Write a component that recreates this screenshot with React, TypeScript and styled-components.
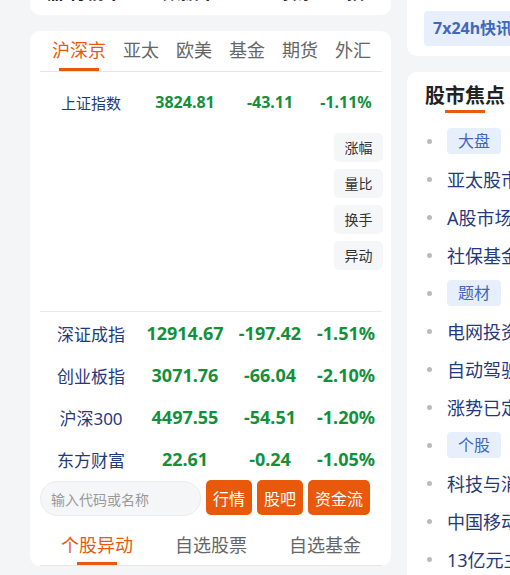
import React, {FC} from 'react';
import styled, {createGlobalStyle} from 'styled-components';

const GlobalStyle = createGlobalStyle`
	body {
		margin: 0;
		background: #f4f5f7;
		overflow: hidden;
		font-family: "Noto Sans", "Noto Sans CJK SC", sans-serif;
	}
`;

const ORANGE = '#e8590c';
const NAVY = '#1f3a7e';
const GREEN = '#13903c';
const TAG_BG = '#e7effc';
const TAG_FG = '#3f68c0';

const Page = styled.div`
	display: flex;
	align-items: flex-start;
	gap: 16px;
	padding-left: 30px;
	margin-top: -28px;
`;

const Column = styled.div<{$width: number}>`
	display: flex;
	flex-direction: column;
	gap: 16px;
	width: ${p => p.$width}px;
	flex-shrink: 0;
`;

const Card = styled.div`
	background: #fff;
	border-radius: 10px;
`;

// only the bottom edge of this card is on screen
const TopStrip = styled(Card)`
	display: flex;
	gap: 22px;
	padding: 8px 16px 11px;
	font-size: 18px;
	line-height: 24px;
	font-weight: 700;
	color: #222;
	white-space: nowrap;
	overflow: hidden;
`;

const MarketCard = styled(Card)`
	padding: 0 9px 0 10px;
`;

const TabBar = styled.div<{$even?: boolean}>`
	display: flex;
	gap: ${p => (p.$even ? '0' : '17px')};
	padding-left: ${p => (p.$even ? '0' : '12px')};
	padding-top: ${p => (p.$even ? '8px' : '0')};
	border-bottom: 1px solid #e6e6e6;
`;

const Tab = styled.div<{$active?: boolean; $even?: boolean}>`
	position: relative;
	flex: ${p => (p.$even ? '1' : '0 0 auto')};
	text-align: center;
	height: ${p => (p.$even ? '42px' : '40px')};
	line-height: ${p => (p.$even ? '44px' : '38px')};
	font-size: 18px;
	color: ${p => (p.$active ? ORANGE : '#666')};
	cursor: pointer;

	&::after {
		content: '';
		display: ${p => (p.$active ? 'block' : 'none')};
		position: absolute;
		left: 50%;
		bottom: 0;
		width: 40px;
		height: 3px;
		margin-left: -20px;
		background: ${ORANGE};
	}
`;

const ChartArea = styled.div`
	height: 224px;
	padding-top: 15px;
	border-bottom: 1px solid #e9e9e9;
`;

const QuoteRow = styled.div<{$small?: boolean}>`
	display: grid;
	grid-template-columns: 102px 86px 84px 68px;
	align-items: center;
	height: ${p => (p.$small ? '30px' : '42px')};
	text-align: center;
	white-space: nowrap;
`;

const QuoteName = styled.span<{$small?: boolean}>`
	font-size: ${p => (p.$small ? '15px' : '17px')};
	color: ${NAVY};
`;

const QuoteNum = styled.span<{$small?: boolean}>`
	font-size: ${p => (p.$small ? '16px' : '18px')};
	font-weight: 700;
	color: ${GREEN};
`;

const SortStack = styled.div`
	display: flex;
	flex-direction: column;
	align-items: flex-end;
	gap: 7px;
	margin-top: 16px;
`;

const SortButton = styled.div`
	width: 49px;
	height: 29px;
	line-height: 29px;
	text-align: center;
	border-radius: 5px;
	background: #f5f6f8;
	font-size: 14px;
	color: #333;
	margin-right: -1px;
`;

const SearchRow = styled.div`
	display: flex;
	gap: 5px;
	height: 35px;
`;

const SearchInput = styled.input`
	width: 161px;
	height: 35px;
	box-sizing: border-box;
	margin: 1px 0 0;
	padding: 0 10px;
	border: 1px solid #ebebeb;
	border-radius: 18px;
	background: #f5f6f8;
	font-family: "Noto Sans CJK SC", sans-serif;
	font-size: 14px;
	color: #333;
	outline: none;

	&::placeholder {
		color: #999;
	}
`;

const ActionButton = styled.button`
	height: 35px;
	padding: 0 7px;
	border: none;
	border-radius: 5px;
	background: ${ORANGE};
	color: #fff;
	font-family: "Noto Sans CJK SC", sans-serif;
	font-size: 16px;
	cursor: pointer;
`;

const NewsTopCard = styled(Card)`
	padding: 39px 17px 10px;
`;

const Tag = styled.span<{$big?: boolean}>`
	display: inline-block;
	height: ${p => (p.$big ? '35px' : '26px')};
	line-height: ${p => (p.$big ? '35px' : '26px')};
	padding: 0 ${p => (p.$big ? '9px' : '11px')};
	border-radius: 4px;
	background: ${TAG_BG};
	color: ${TAG_FG};
	font-size: 16px;
	font-weight: ${p => (p.$big ? 700 : 400)};
	white-space: nowrap;
`;

const FocusCard = styled(Card)`
	padding: 12px 18px;
`;

const FocusTitle = styled.div`
	display: inline-flex;
	flex-direction: column;
	align-items: center;
	gap: 2px;
	font-size: 20px;
	line-height: 24px;
	font-weight: 700;
	color: #222;

	&::after {
		content: '';
		width: 40px;
		height: 3px;
		background: ${ORANGE};
	}
`;

const FocusList = styled.ul`
	list-style: none;
	margin: 9px 0 0;
	padding: 0;
`;

const FocusItem = styled.li`
	display: flex;
	align-items: center;
	height: 38px;
	font-size: 18px;
	color: ${NAVY};
	white-space: nowrap;

	&::before {
		content: '';
		flex-shrink: 0;
		width: 5px;
		height: 5px;
		border-radius: 50%;
		background: #bbb;
		margin: 0 15px 0 2px;
	}
`;

type Quote = {name: string; price: string; change: string; pct: string};

const quotes: Quote[] = [
	{name: '深证成指', price: '12914.67', change: '-197.42', pct: '-1.51%'},
	{name: '创业板指', price: '3071.76', change: '-66.04', pct: '-2.10%'},
	{name: '沪深300', price: '4497.55', change: '-54.51', pct: '-1.20%'},
	{name: '东方财富', price: '22.61', change: '-0.24', pct: '-1.05%'},
];

const marketTabs = ['沪深京', '亚太', '欧美', '基金', '期货', '外汇'];
const sortKeys = ['涨幅', '量比', '换手', '异动'];
const bottomTabs = ['个股异动', '自选股票', '自选基金'];

type FocusEntry = {tag?: string; text?: string};

const focus: FocusEntry[] = [
	{tag: '大盘'},
	{text: '亚太股市普遍走低'},
	{text: 'A股市场成交额缩量'},
	{text: '社保基金最新持仓曝光'},
	{tag: '题材'},
	{text: '电网投资再提速'},
	{text: '自动驾驶板块走强'},
	{text: '涨势已定？机构解读'},
	{tag: '个股'},
	{text: '科技与消费双主线'},
	{text: '中国移动盘中创新高'},
	{text: '13亿元主力资金净流入'},
];

const App: FC = () =>
	<>
		<GlobalStyle />
		<Page>
			<Column $width={361}>
				<TopStrip>
					<span>器 行情中心</span>
					<span>数据中心</span>
					<span>全球财经直播</span>
				</TopStrip>
				<MarketCard>
					<TabBar>
						{marketTabs.map((t, i) =>
							<Tab key={t} $active={i === 0}>{t}</Tab>
						)}
					</TabBar>
					<ChartArea>
						<QuoteRow $small>
							<QuoteName $small>上证指数</QuoteName>
							<QuoteNum $small>3824.81</QuoteNum>
							<QuoteNum $small>-43.11</QuoteNum>
							<QuoteNum $small>-1.11%</QuoteNum>
						</QuoteRow>
						<SortStack>
							{sortKeys.map(k => <SortButton key={k}>{k}</SortButton>)}
						</SortStack>
					</ChartArea>
					{quotes.map(q =>
						<QuoteRow key={q.name}>
							<QuoteName>{q.name}</QuoteName>
							<QuoteNum>{q.price}</QuoteNum>
							<QuoteNum>{q.change}</QuoteNum>
							<QuoteNum>{q.pct}</QuoteNum>
						</QuoteRow>
					)}
					<SearchRow>
						<SearchInput placeholder="输入代码或名称" />
						<ActionButton>行情</ActionButton>
						<ActionButton>股吧</ActionButton>
						<ActionButton>资金流</ActionButton>
					</SearchRow>
					<TabBar $even>
						{bottomTabs.map((t, i) =>
							<Tab key={t} $even $active={i === 0}>{t}</Tab>
						)}
					</TabBar>
				</MarketCard>
			</Column>
			<Column $width={300}>
				<NewsTopCard>
					<Tag $big>7x24h快讯 全球财经直播</Tag>
				</NewsTopCard>
				<FocusCard>
					<FocusTitle>股市焦点</FocusTitle>
					<FocusList>
						{focus.map((f, i) =>
							<FocusItem key={i}>
								{f.tag ? <Tag>{f.tag}</Tag> : f.text}
							</FocusItem>
						)}
					</FocusList>
				</FocusCard>
			</Column>
		</Page>
	</>;

export default App;
